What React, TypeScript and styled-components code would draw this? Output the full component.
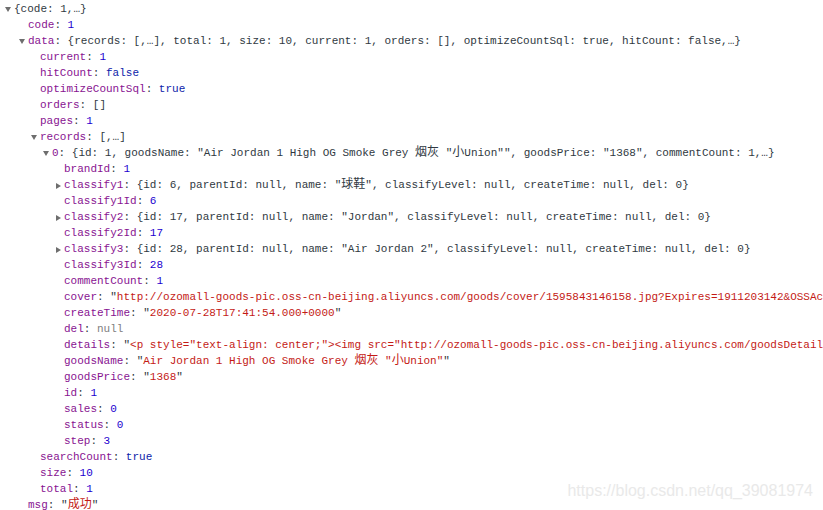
import React from "react";
import styled, { createGlobalStyle } from "styled-components";

const GlobalStyle = createGlobalStyle`
  html, body { margin: 0; padding: 0; background: #ffffff; }
  body { width: 823px; height: 510px; overflow: hidden; }
`;

type Kind = "p" | "n" | "b" | "z" | "s" | "q";
type Seg = [Kind, string];
type RowData = { depth: number; arrow?: "down" | "right"; name?: string; value: Seg[] };

const COLORS: Record<Kind, string> = {
  p: "#303942",
  n: "#1c00cf",
  b: "#0d22aa",
  z: "#808080",
  s: "#c41a16",
  q: "#303942",
};

const Page = styled.div`
  position: relative;
  width: 823px;
  height: 510px;
  overflow: hidden;
  background: #ffffff;
`;

const Tree = styled.div`
  display: flex;
  flex-direction: column;
  padding-top: 1px;
  font-family: "Liberation Mono", "Noto Sans CJK SC", monospace;
  font-size: 11px;
  color: #303942;
`;

const Row = styled.div<{ $depth: number }>`
  display: flex;
  align-items: center;
  height: 16px;
  line-height: 16px;
  white-space: pre;
  padding-left: ${(p) => (p.$depth === 0 ? 14 : 16 + 12 * p.$depth)}px;
`;

const ArrowSlot = styled.span`
  display: inline-flex;
  align-items: center;
  justify-content: flex-start;
  width: 9px;
  margin-left: -9px;
  height: 16px;
`;

const Arrow = styled.span<{ $dir: "down" | "right" }>`
  width: 0;
  height: 0;
  margin-top: 1px;
  ${(p) =>
    p.$dir === "down"
      ? `border-left: 3px solid transparent; border-right: 3px solid transparent; border-top: 5px solid #6e6e6e;`
      : `border-top: 3.5px solid transparent; border-bottom: 3.5px solid transparent; border-left: 5px solid #6e6e6e; margin-left: 1px;`}
`;

const Key = styled.span`
  color: #881391;
`;

const Val = styled.span<{ $kind: Kind }>`
  color: ${(p) => COLORS[p.$kind]};
`;

const Cjk = styled.span`
  font-family: "Noto Sans CJK SC", sans-serif;
  font-size: 12px;
  line-height: 12px;
`;

const Watermark = styled.div`
  position: absolute;
  right: 10px;
  top: 483px;
  font-family: "Liberation Sans", Arial, sans-serif;
  font-size: 16px;
  line-height: 16px;
  color: #e9e9e9;
  white-space: nowrap;
`;

const CJK_RE = /([\u3400-\u9fff]+)/;

function Txt({ text }: { text: string }) {
  const parts = text.split(CJK_RE);
  return (
    <>
      {parts.map((part, i) =>
        CJK_RE.test(part) ? <Cjk key={i}>{part}</Cjk> : <React.Fragment key={i}>{part}</React.Fragment>
      )}
    </>
  );
}

const str = (s: string): Seg[] => [["q", '"'], ["s", s], ["q", '"']];

const rows: RowData[] = [
  { depth: 0, arrow: "down", value: [["p", "{code: 1,…}"]] },
  { depth: 1, name: "code", value: [["n", "1"]] },
  {
    depth: 1,
    arrow: "down",
    name: "data",
    value: [["p", "{records: [,…], total: 1, size: 10, current: 1, orders: [], optimizeCountSql: true, hitCount: false,…}"]],
  },
  { depth: 2, name: "current", value: [["n", "1"]] },
  { depth: 2, name: "hitCount", value: [["b", "false"]] },
  { depth: 2, name: "optimizeCountSql", value: [["b", "true"]] },
  { depth: 2, name: "orders", value: [["p", "[]"]] },
  { depth: 2, name: "pages", value: [["n", "1"]] },
  { depth: 2, arrow: "down", name: "records", value: [["p", "[,…]"]] },
  {
    depth: 3,
    arrow: "down",
    name: "0",
    value: [["p", '{id: 1, goodsName: "Air Jordan 1 High OG Smoke Grey 烟灰 "小Union"", goodsPrice: "1368", commentCount: 1,…}']],
  },
  { depth: 4, name: "brandId", value: [["n", "1"]] },
  {
    depth: 4,
    arrow: "right",
    name: "classify1",
    value: [["p", '{id: 6, parentId: null, name: "球鞋", classifyLevel: null, createTime: null, del: 0}']],
  },
  { depth: 4, name: "classify1Id", value: [["n", "6"]] },
  {
    depth: 4,
    arrow: "right",
    name: "classify2",
    value: [["p", '{id: 17, parentId: null, name: "Jordan", classifyLevel: null, createTime: null, del: 0}']],
  },
  { depth: 4, name: "classify2Id", value: [["n", "17"]] },
  {
    depth: 4,
    arrow: "right",
    name: "classify3",
    value: [["p", '{id: 28, parentId: null, name: "Air Jordan 2", classifyLevel: null, createTime: null, del: 0}']],
  },
  { depth: 4, name: "classify3Id", value: [["n", "28"]] },
  { depth: 4, name: "commentCount", value: [["n", "1"]] },
  {
    depth: 4,
    name: "cover",
    value: [
      ["q", '"'],
      ["s", "http://ozomall-goods-pic.oss-cn-beijing.aliyuncs.com/goods/cover/1595843146158.jpg?Expires=1911203142&OSSAc"],
    ],
  },
  { depth: 4, name: "createTime", value: str("2020-07-28T17:41:54.000+0000") },
  { depth: 4, name: "del", value: [["z", "null"]] },
  {
    depth: 4,
    name: "details",
    value: [
      ["q", '"'],
      ["s", '<p style="text-align: center;"><img src="http://ozomall-goods-pic.oss-cn-beijing.aliyuncs.com/goodsDetail'],
    ],
  },
  { depth: 4, name: "goodsName", value: str('Air Jordan 1 High OG Smoke Grey 烟灰 "小Union"') },
  { depth: 4, name: "goodsPrice", value: str("1368") },
  { depth: 4, name: "id", value: [["n", "1"]] },
  { depth: 4, name: "sales", value: [["n", "0"]] },
  { depth: 4, name: "status", value: [["n", "0"]] },
  { depth: 4, name: "step", value: [["n", "3"]] },
  { depth: 2, name: "searchCount", value: [["b", "true"]] },
  { depth: 2, name: "size", value: [["n", "10"]] },
  { depth: 2, name: "total", value: [["n", "1"]] },
  { depth: 1, name: "msg", value: str("成功") },
];

export default function App() {
  return (
    <Page>
      <GlobalStyle />
      <Tree>
        {rows.map((r, i) => (
          <Row key={i} $depth={r.depth}>
            {r.arrow && (
              <ArrowSlot>
                <Arrow $dir={r.arrow} />
              </ArrowSlot>
            )}
            {r.name !== undefined && (
              <>
                <Key>{r.name}</Key>
                <span>: </span>
              </>
            )}
            {r.value.map(([k, t], j) => (
              <Val key={j} $kind={k}>
                <Txt text={t} />
              </Val>
            ))}
          </Row>
        ))}
      </Tree>
      <Watermark>https://blog.csdn.net/qq_39081974</Watermark>
    </Page>
  );
}
